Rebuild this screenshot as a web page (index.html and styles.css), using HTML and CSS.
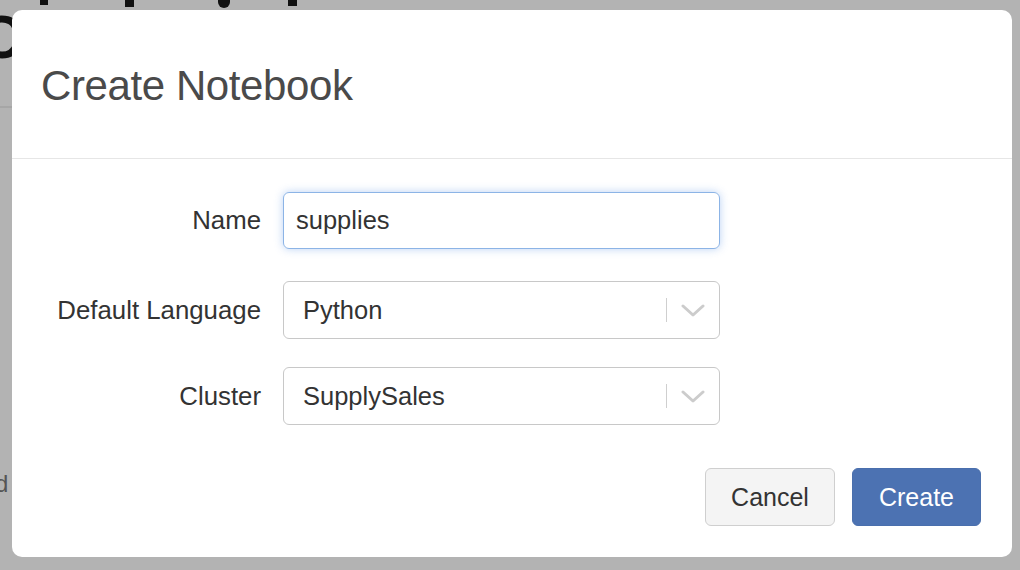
FILE: index.html
```html
<!DOCTYPE html>
<html>
<head>
<meta charset="utf-8">
<link rel="stylesheet" href="styles.css">
</head>
<body>
<div class="backdrop">
  <span class="bg-mark m1"></span>
  <span class="bg-mark m2"></span>
  <span class="bg-mark m3"></span>
  <span class="bg-mark m4"></span>
  <span class="bg-c">C</span>
  <span class="bg-line"></span>
  <span class="bg-d">d</span>
</div>
<div class="modal">
  <div class="modal-header">
    <h1 class="modal-title">Create Notebook</h1>
  </div>
  <div class="modal-body">
    <div class="form-row row-name">
      <label class="label">Name</label>
      <div class="input focused">supplies</div>
    </div>
    <div class="form-row row-lang">
      <label class="label">Default Language</label>
      <div class="select">
        <span class="select-value">Python</span>
        <span class="select-sep"></span>
        <svg class="chev" width="24" height="14" viewBox="0 0 24 14"><path d="M2 2 L12 11 L22 2" fill="none" stroke="#cccccc" stroke-width="3" stroke-linecap="round" stroke-linejoin="round"/></svg>
      </div>
    </div>
    <div class="form-row row-cluster">
      <label class="label">Cluster</label>
      <div class="select">
        <span class="select-value">SupplySales</span>
        <span class="select-sep"></span>
        <svg class="chev" width="24" height="14" viewBox="0 0 24 14"><path d="M2 2 L12 11 L22 2" fill="none" stroke="#cccccc" stroke-width="3" stroke-linecap="round" stroke-linejoin="round"/></svg>
      </div>
    </div>
    <div class="footer">
      <button class="btn btn-default">Cancel</button>
      <button class="btn btn-primary">Create</button>
    </div>
  </div>
</div>
</body>
</html>
```

FILE: styles.css
```css
html, body {
  margin: 0;
  padding: 0;
}
body {
  width: 1020px;
  height: 570px;
  background: #b3b3b3;
  font-family: "Liberation Sans", Arial, sans-serif;
  color: #333;
  overflow: hidden;
  position: relative;
}
.backdrop {
  position: absolute;
  inset: 0;
}
.bg-mark {
  position: absolute;
  top: 0;
  background: #111;
}
.m1 { left: 40px; width: 8px; height: 5px; }
.m2 { left: 125px; width: 9px; height: 7px; }
.m3 { left: 218px; width: 12px; height: 8px; border-radius: 0 0 6px 6px; }
.m4 { left: 288px; width: 9px; height: 6px; }
.bg-c {
  position: absolute;
  left: -22px;
  top: 6px;
  font-size: 62px;
  font-weight: bold;
  color: #111;
  line-height: 62px;
}
.bg-line {
  position: absolute;
  left: 0;
  top: 106px;
  width: 12px;
  height: 2px;
  background: #a6a6a6;
}
.bg-d {
  position: absolute;
  left: -5px;
  top: 470px;
  font-size: 24px;
  line-height: 28px;
  color: #555;
}
.modal {
  position: absolute;
  left: 12px;
  top: 10px;
  width: 1000px;
  height: 547px;
  background: #fff;
  border-radius: 10px;
  box-sizing: border-box;
}
.modal-header {
  height: 149px;
  box-sizing: border-box;
  border-bottom: 1px solid #e6e6e6;
  padding: 52px 29px 0;
}
.modal-title {
  margin: 0;
  font-size: 42px;
  line-height: 48px;
  font-weight: normal;
  color: #4a4a4a;
  letter-spacing: -0.4px;
}
.modal-body {
  padding: 33px 31px 0 0;
}
.form-row {
  display: grid;
  grid-template-columns: 249px 437px;
  column-gap: 22px;
  align-items: center;
}
.row-lang { margin-top: 32px; }
.row-cluster { margin-top: 28px; }
.label {
  text-align: right;
  font-size: 25.8px;
  color: #333;
}
.input, .select {
  box-sizing: border-box;
  height: 58px;
  border: 1px solid #c8c8c8;
  border-radius: 6px;
  font-size: 25.5px;
  color: #333;
  display: flex;
  align-items: center;
}
.input {
  height: 57px;
  padding-left: 12px;
}
.input.focused {
  border-color: #8cb4e6;
  box-shadow: 0 0 8px rgba(102, 155, 230, 0.45);
}
.select {
  padding-left: 19px;
  padding-right: 14px;
}
.select-value {
  flex: 1;
}
.select-sep {
  width: 1px;
  height: 24px;
  background: #cfcfcf;
  margin-right: 14px;
}
.chev {
  display: block;
  margin-top: 2px;
}
.footer {
  display: flex;
  justify-content: flex-end;
  gap: 17px;
  margin-top: 43px;
}
.btn {
  height: 58px;
  box-sizing: border-box;
  border-radius: 6px;
  font-family: "Liberation Sans", Arial, sans-serif;
  font-size: 25px;
  padding: 0 24px;
}
.btn-default {
  width: 130px;
  background: #f4f4f4;
  border: 1px solid #cfcfcf;
  color: #333;
}
.btn-primary {
  width: 129px;
  background: #4c72b2;
  border: 1px solid #4a6fad;
  color: #fff;
}
```
